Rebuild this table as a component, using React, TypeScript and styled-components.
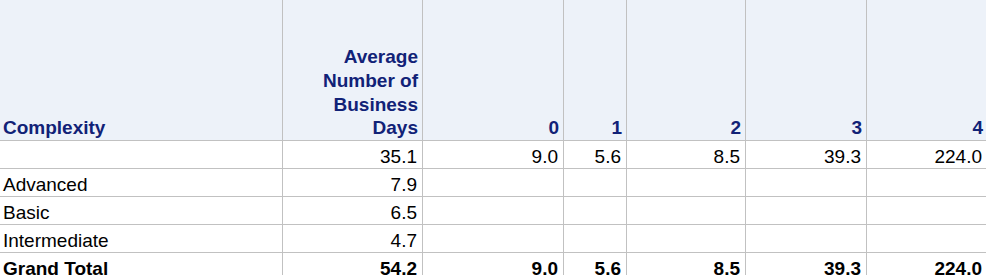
import React from "react";
import styled, { createGlobalStyle } from "styled-components";

const GlobalStyle = createGlobalStyle`
  html, body {
    margin: 0;
    padding: 0;
    background: #ffffff;
    overflow: hidden;
  }
  body {
    font-family: "Liberation Sans", Arial, sans-serif;
  }
`;

const Sheet = styled.div`
  display: grid;
  grid-template-columns: 282px 139px 140px 62px 118px 120px 120px;
  grid-template-rows: 140px repeat(5, 27px);
  gap: 1px;
  width: 987px;
  background: #c1c1c1;
  font-family: "Liberation Sans", Arial, sans-serif;
  font-size: 19px;
`;

interface CellProps {
  $left?: boolean;
  $bold?: boolean;
}

const HeadCell = styled.div<CellProps>`
  display: flex;
  align-items: flex-end;
  justify-content: ${(p) => (p.$left ? "flex-start" : "flex-end")};
  padding: ${(p) => (p.$left ? "0 0 0 3px" : "0 4px 0 0")};
  background: #edf2f9;
  color: #112277;
  font-weight: bold;
  line-height: 23.7px;
  text-align: ${(p) => (p.$left ? "left" : "right")};
`;

const Cell = styled.div<CellProps>`
  display: flex;
  align-items: flex-end;
  justify-content: ${(p) => (p.$left ? "flex-start" : "flex-end")};
  padding: ${(p) => (p.$left ? "0 0 0 3px" : "0 5px 0 0")};
  background: #ffffff;
  color: #000000;
  font-weight: ${(p) => (p.$bold ? "bold" : "normal")};
  line-height: normal;
  white-space: nowrap;
`;

const columns = ["0", "1", "2", "3", "4"];

const rows: { label: string; avg: string; values: string[]; total?: boolean }[] = [
  { label: "", avg: "35.1", values: ["9.0", "5.6", "8.5", "39.3", "224.0"] },
  { label: "Advanced", avg: "7.9", values: ["", "", "", "", ""] },
  { label: "Basic", avg: "6.5", values: ["", "", "", "", ""] },
  { label: "Intermediate", avg: "4.7", values: ["", "", "", "", ""] },
  { label: "Grand Total", avg: "54.2", values: ["9.0", "5.6", "8.5", "39.3", "224.0"], total: true },
];

const App: React.FC = () => {
  return (
    <>
      <GlobalStyle />
      <Sheet>
        <HeadCell $left>Complexity</HeadCell>
        <HeadCell>
          Average
          <br />
          Number of
          <br />
          Business
          <br />
          Days
        </HeadCell>
        {columns.map((c) => (
          <HeadCell key={c}>{c}</HeadCell>
        ))}

        {rows.map((r, i) => (
          <React.Fragment key={i}>
            <Cell $left $bold={r.total}>
              {r.label}
            </Cell>
            <Cell $bold={r.total}>{r.avg}</Cell>
            {r.values.map((v, j) => (
              <Cell key={j} $bold={r.total}>
                {v}
              </Cell>
            ))}
          </React.Fragment>
        ))}
      </Sheet>
    </>
  );
};

export default App;
